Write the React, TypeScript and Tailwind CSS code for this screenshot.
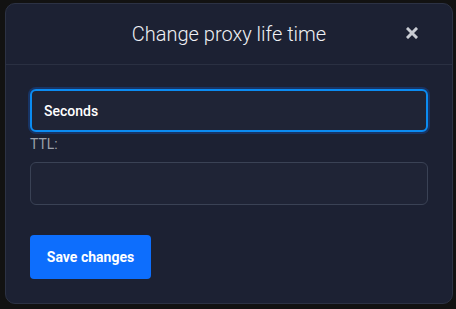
export default function App() {
  return (
    <div className="h-[309px] w-[456px] bg-[#121212] pt-[3px] pl-[5px] font-['Roboto',sans-serif]">
      <div className="flex h-[301px] w-[448px] flex-col rounded-[10px] border border-[#2c3244] bg-[#1c2133]">
        <div className="relative flex h-[61px] items-center justify-center border-b border-[#2a3042]">
          <h2 className="text-[20px] font-light text-[#eef0f4]">Change proxy life time</h2>
          <button className="absolute right-[34px] top-[23px] text-[#c9ccd3]">
            <svg width="12" height="12" viewBox="0 0 12 12">
              <path d="M2 2 L10 10 M10 2 L2 10" stroke="currentColor" strokeWidth="3" strokeLinecap="square" />
            </svg>
          </button>
        </div>
        <div className="flex flex-col px-6 pt-6">
          <input
            readOnly
            value="Seconds"
            className="h-[43px] w-full rounded-[6px] border-2 border-[#0b8cf2] bg-[#1f2436] px-3 text-[14px] font-medium text-white outline-none shadow-[0_0_0_2px_rgba(13,110,253,0.25)]"
          />
          <label className="mt-[2px] text-[14px] leading-[20px] text-[#9aa0aa]">TTL:</label>
          <input
            readOnly
            className="mt-[8px] h-[43px] w-full rounded-[6px] border border-[#3a4255] bg-[#1f2436] px-3 text-[14px] text-white outline-none"
          />
          <button className="mt-[30px] h-[44px] w-[121px] rounded-[4px] bg-[#0d6efd] text-[14px] font-bold text-white">
            Save changes
          </button>
        </div>
      </div>
    </div>
  );
}
